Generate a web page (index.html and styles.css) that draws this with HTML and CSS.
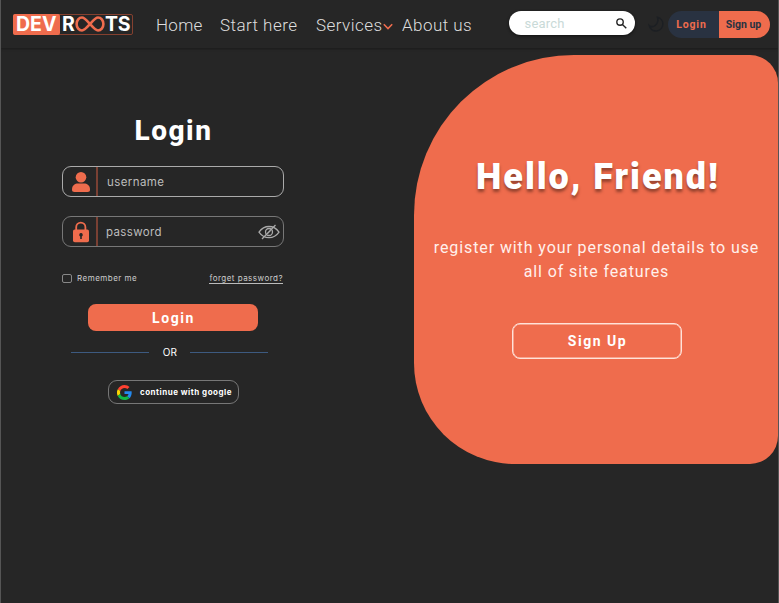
FILE: index.html
```html
<!DOCTYPE html>
<html lang="en">
<head>
<meta charset="utf-8">
<title>DevRoots Login</title>
<link rel="stylesheet" href="styles.css">
</head>
<body>
<header class="header">
  <a class="logo"><span class="logo-dev">DEV</span><span class="logo-roots"><span class="logo-r">R</span><svg class="infinity" viewBox="0 0 30 16"><path d="M15 8C11 3.500 9.500 1.500 7 1.500a5.400 6.500 0 0 0 0 13C9.500 14.500 11 12.500 15 8S20.500 1.500 23 1.500a5.400 6.500 0 0 1 0 13C20.500 14.500 19 12.500 15 8Z"/></svg><span class="logo-ts">TS</span></span></a>
  <nav class="nav">
    <a class="home">Home</a><a class="start">Start here</a><a class="services">Services</a><svg class="chevron" viewBox="0 0 10 7"><path d="m.8 1.300 4.200 4.200 4.200-4.200"/></svg><a class="about">About us</a>
  </nav>
  <div class="search"><span>search</span><svg viewBox="0 0 12 12"><circle cx="4.400" cy="4.400" r="3.500"/><path d="m7 7 4.200 4.200"/></svg></div>
  <svg class="moon" viewBox="0 0 16 16"><path d="M9.500 1.300A6.900 6.900 0 1 1 1.200 9.500C5 12.500 11.500 8.500 9.500 1.300Z"/></svg>
  <div class="auth"><button class="auth-login">Login</button><button class="auth-signup">Sign up</button></div>
</header>
<main class="main">
  <form class="form">
    <h1>Login</h1>
    <div class="field user">
      <span class="field-icon"><svg width="20" height="22" viewBox="0 0 20 22"><circle cx="10" cy="6.200" r="5.300"/><path d="M1 18.500c0-4 3-5.900 6-5.900h6c3 0 6 1.900 6 5.900 0 1.800-.8 2.500-2.500 2.500h-13C1.800 21 1 20.300 1 18.500Z"/></svg></span>
      <span class="placeholder">username</span>
    </div>
    <div class="field pass">
      <span class="field-icon"><svg width="18" height="22" viewBox="0 0 18 22"><path class="shackle" d="M4.200 10V6.200a4.600 4.600 0 0 1 9.200 0V10"/><rect x="1" y="8.500" width="16" height="12.800" rx="1.800"/><path class="keyhole" d="M9 12a1.800 1.800 0 0 0-.8 3.400V18h1.600v-2.600A1.800 1.800 0 0 0 9 12Z"/></svg></span>
      <span class="placeholder">password</span>
      <svg class="eye" viewBox="0 0 22 16"><path d="M1 8.200C3.500 4.600 7 2.500 11 2.500s7.500 2.100 10 5.700c-2.500 3.600-6 5.500-10 5.500S3.500 11.800 1 8.200Z"/><circle cx="11" cy="8" r="3.500"/><path d="M9.500 9.500 12.500 6.500M4 15 17.500 1"/></svg>
    </div>
    <div class="options"><span class="checkbox"></span><span class="remember">Remember me</span><a class="forgot">forget password?</a></div>
    <button class="submit">Login</button>
    <div class="divider"><i></i><span>OR</span><i></i></div>
    <button class="google"><svg viewBox="0 0 48 48"><path fill="#ff4131" d="M24 9.500c3.500 0 6.700 1.200 9.200 3.600l6.900-6.900C35.900 2.400 30.500 0 24 0 14.600 0 6.500 5.400 2.600 13.200l8 6.200C12.400 13.700 17.700 9.500 24 9.500Z"/><path fill="#2489ee" d="M47 24.600c0-1.600-.2-3.100-.4-4.600H24v9h12.900c-.6 3-2.200 5.500-4.700 7.200l7.700 6C44.400 38 47 31.800 47 24.600Z"/><path fill="#fbd500" d="M10.500 28.600a14.500 14.500 0 0 1 0-9.200l-8-6.200a24 24 0 0 0 0 21.600l8-6.200Z"/><path fill="#12b944" d="M24 48c6.500 0 11.900-2.100 15.900-5.800l-7.700-6c-2.200 1.500-4.900 2.300-8.200 2.300-6.300 0-11.600-4.200-13.500-9.900l-8 6.200C6.500 42.600 14.600 48 24 48Z"/></svg><span>continue with google</span></button>
  </form>
  <section class="panel">
    <h2>Hello, Friend!</h2>
    <p>register with your personal details to use<br>all of site features</p>
    <button class="signup">Sign Up</button>
  </section>
</main>
</body>
</html>
```
FILE: styles.css
```css
* { box-sizing: border-box; }
html { background: #262626; }
body {
  margin: 0;
  height: 603px;
  border-left: 1px solid #555;
  border-right: 1px solid #555;
  background: #262626;
  color: #fff;
  font-family: Roboto, sans-serif;
  overflow: hidden;
}
h1, h2, p { margin: 0; }
button { font: inherit; padding: 0; border: 0; background: none; color: inherit; }
svg { display: block; flex: none; }
span, a { white-space: nowrap; }

.header {
  display: flex;
  align-items: center;
  height: 48px;
  padding-left: 12px;
  box-shadow: 0 1px 2px #1b1b1b;
}
.logo {
  display: flex;
  width: 120px;
  height: 21px;
  border: 1px solid #84402f;
  border-radius: 2px;
  font: 700 19.5px/19px Inter, sans-serif;
}
.logo-dev {
  width: 47px;
  height: 21px;
  margin: -1px 0 0 -1px;
  padding-left: 3px;
  border-radius: 2px;
  background: #ef6c4d;
  line-height: 21px;
}
.logo-roots { display: flex; align-items: center; padding-left: 2px; }
.logo-r { width: 13px; }
.infinity { width: 30px; height: 16px; fill: none; stroke: #ef6c4d; stroke-width: 2.6; }
.logo-ts { letter-spacing: -.2px; }

.nav {
  display: flex;
  align-items: center;
  width: 375.5px;
  padding-left: 23px;
  margin-top: 2px;
  color: #dedede;
  font-size: 17px;
  font-weight: 300;
  letter-spacing: .45px;
}
.home { width: 64px; letter-spacing: .3px; }
.start { width: 96px; }
.services { width: 67px; }
.chevron { width: 10px; height: 7px; margin: 3px 9px 0 0; fill: none; stroke: #ef6c4d; stroke-width: 1.6; }

.search {
  display: flex;
  align-items: center;
  justify-content: space-between;
  width: 126px;
  height: 24px;
  margin-top: -2px;
  padding: 0 8px 0 16px;
  border-radius: 12px;
  background: #fff;
  box-shadow: 0 1px 3px #111;
  color: #c9dad8;
  font-size: 13px;
  letter-spacing: .2px;
}
.search svg { width: 11px; height: 11px; fill: none; stroke: #222; stroke-width: 1.5; }
.moon { width: 16px; height: 16px; margin: -1px 0 0 13px; fill: none; stroke: #1c1f23; stroke-width: 1.5; }
.auth {
  display: flex;
  width: 102px;
  height: 27px;
  margin: 1px 0 0 4.5px;
  border-radius: 14px;
  overflow: hidden;
  font-size: 10.500px;
  font-weight: 700;
  letter-spacing: .95px;
}
.auth-login { width: 51px; padding-right: 4px; background: #293241; color: #ef6c4d; letter-spacing: .8px; }
.auth-signup { width: 51px; padding-right: 2px; background: #ef6c4d; color: #293241; }

.main { display: flex; justify-content: space-between; align-items: flex-start; padding-top: 7px; }
.form { display: flex; flex-direction: column; width: 222px; margin-left: 61px; padding-top: 60px; }
.form h1 { margin-left: 1px; font-size: 28px; font-weight: 800; line-height: 32px; letter-spacing: 1.5px; text-align: center; }
.field {
  display: flex;
  align-items: center;
  height: 31px;
  border: 1px solid #aaa;
  border-radius: 9px;
  font: 11.500px Inter, sans-serif;
  letter-spacing: .4px;
  color: #bdbdbd;
}
.user { margin-top: 19px; }
.pass { margin-top: 19px; border-color: #777; }
.field-icon { display: flex; align-items: center; justify-content: center; width: 35px; height: 29px; padding-left: 2px; border-right: 2px solid #7a4033; }
.field-icon svg { fill: #ef6c4d; }
.field-icon .shackle { fill: none; stroke: #ef6c4d; stroke-width: 1.8; }
.field-icon .keyhole { fill: #262626; }
.placeholder { margin-left: 9px; }
.pass .placeholder { margin-left: 8px; letter-spacing: .35px; }
.eye { width: 22px; height: 16px; margin: 0 3px 0 auto; fill: none; stroke: #aaa; stroke-width: 1.3; }
.options { display: flex; align-items: center; height: 12px; margin-top: 25px; color: #ccc; font: 8px/12px Inter, sans-serif; letter-spacing: .48px; }
.checkbox { width: 10px; height: 9px; border: 1px solid #888; border-radius: 2px; }
.remember { margin-left: 5px; }
.forgot { height: 11px; margin: 0 1px 0 auto; line-height: 11px; border-bottom: 1px solid #bbb; }
.submit { align-self: center; width: 170px; height: 27px; margin-top: 20px; border-radius: 8px; background: #ef6c4d; padding-left: 1px; font-size: 14px; font-weight: 700; letter-spacing: 1.6px; }
.divider { display: flex; align-items: center; justify-content: space-between; width: 197px; height: 14px; margin: 14px 0 0 9px; font: 10px Inter, sans-serif; letter-spacing: .3px; }
.divider span { padding-left: 1px; }
.divider i { width: 78px; height: 1px; background: #3d5a80; }
.google { display: flex; align-items: center; width: 131px; height: 24px; margin: 21px 0 0 46px; padding-left: 8px; border: 1px solid #777; border-radius: 9px; font: 700 8px Inter, sans-serif; letter-spacing: .5px; }
.google svg { width: 15px; height: 15px; margin-right: 8px; }

.panel {
  width: 364px;
  height: 409px;
  padding-top: 100px;
  border-radius: 160px 28px 28px 101px;
  background: #ef6c4d;
  text-align: center;
}
.panel h2 { margin-left: 4px; font-size: 36px; font-weight: 900; line-height: 44px; letter-spacing: 1.95px; text-shadow: 0 3px 3px rgba(60, 25, 15, .5); }
.panel p { margin: 37px 0 0 1px; font-size: 16px; line-height: 24px; letter-spacing: .9px; color: #fff0ec; white-space: nowrap; }
.signup { width: 170px; height: 36px; margin: 39px 0 0 2px; border: 1px solid #ffe2d9; box-shadow: inset 0 0 0 .5px #ffd9ce; border-radius: 8px; padding-left: 1px; font-size: 14px; font-weight: 700; letter-spacing: 1.5px; }
```
